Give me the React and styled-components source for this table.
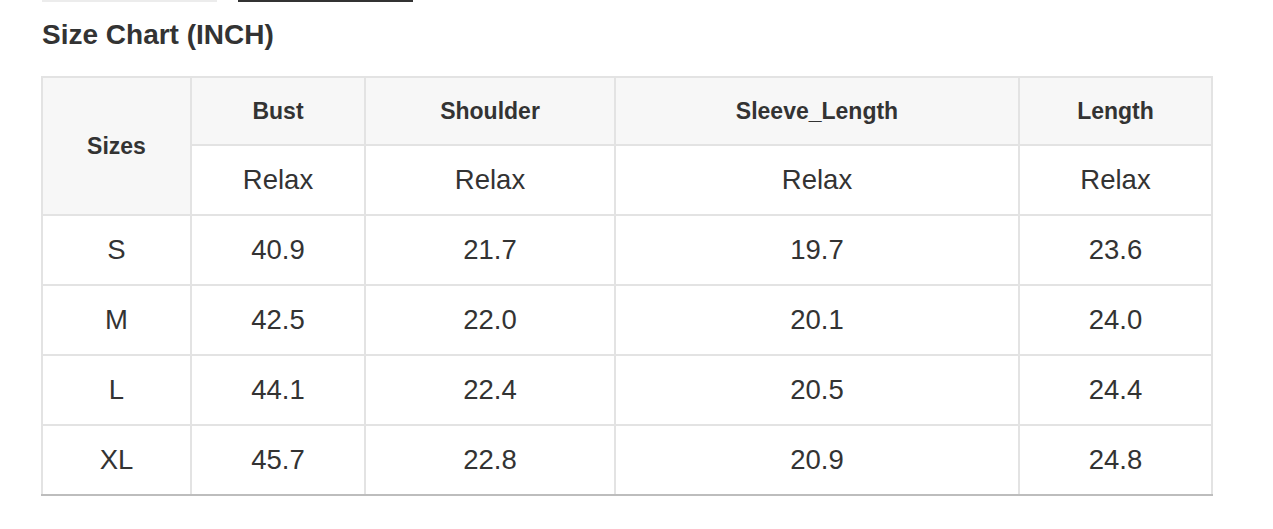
import React from 'react';
import styled, { createGlobalStyle } from 'styled-components';

const GlobalStyle = createGlobalStyle`
  html, body {
    margin: 0;
    padding: 0;
    background: #fff;
  }
  body {
    font-family: "Liberation Sans", Arial, Helvetica, sans-serif;
    color: #333;
  }
`;

const Wrapper = styled.div`
  padding: 0 42px;
`;

const TabBar = styled.div`
  display: flex;
  gap: 21px;
`;

const Tab = styled.div`
  width: 175px;
  height: 2px;
  background-color: ${(p) => (p.$active ? '#333' : '#ececec')};
`;

const Title = styled.h2`
  margin: 15px 0 23px;
  font-size: 28px;
  line-height: 36px;
  font-weight: 700;
  color: #333;
`;

const Table = styled.table`
  width: 1170px;
  margin-left: -1px;
  table-layout: fixed;
  border-collapse: collapse;
  border: 2px solid #e3e3e3;
  text-align: center;
`;

const HeadCell = styled.th`
  border: 2px solid #e3e3e3;
  background-color: #f7f7f7;
  font-size: 23px;
  font-weight: 700;
  color: #333;
  padding: 0;
  height: 66px;
`;

const Cell = styled.td`
  border: 2px solid #e3e3e3;
  font-size: 27.5px;
  font-weight: 400;
  color: #333;
  padding: 0;
  height: 68px;
  background-color: #fff;
`;

const LastRow = styled.tr`
  td {
    border-bottom: 2px solid #bdbdbd;
  }
`;

const columns = [
  { name: 'Bust', width: 174 },
  { name: 'Shoulder', width: 250 },
  { name: 'Sleeve_Length', width: 404 },
  { name: 'Length', width: 193 },
];

const rows = [
  ['S', '40.9', '21.7', '19.7', '23.6'],
  ['M', '42.5', '22.0', '20.1', '24.0'],
  ['L', '44.1', '22.4', '20.5', '24.4'],
  ['XL', '45.7', '22.8', '20.9', '24.8'],
];

const SizeChart = () => {
  return (
    <Table>
      <colgroup>
        <col style={{ width: 149 }} />
        {columns.map((c) => (
          <col key={c.name} style={{ width: c.width }} />
        ))}
      </colgroup>
      <thead>
        <tr>
          <HeadCell rowSpan={2}>Sizes</HeadCell>
          {columns.map((c) => (
            <HeadCell key={c.name}>{c.name}</HeadCell>
          ))}
        </tr>
        <tr>
          {columns.map((c) => (
            <Cell key={c.name}>Relax</Cell>
          ))}
        </tr>
      </thead>
      <tbody>
        {rows.map((r, i) => {
          const Row = i === rows.length - 1 ? LastRow : 'tr';
          return (
            <Row key={r[0]}>
              {r.map((v, j) => (
                <Cell key={j}>{v}</Cell>
              ))}
            </Row>
          );
        })}
      </tbody>
    </Table>
  );
};

const App = () => {
  return (
    <>
      <GlobalStyle />
      <Wrapper>
        <TabBar>
          <Tab />
          <Tab $active />
        </TabBar>
        <Title>Size Chart (INCH)</Title>
        <SizeChart />
      </Wrapper>
    </>
  );
};

export default App;
